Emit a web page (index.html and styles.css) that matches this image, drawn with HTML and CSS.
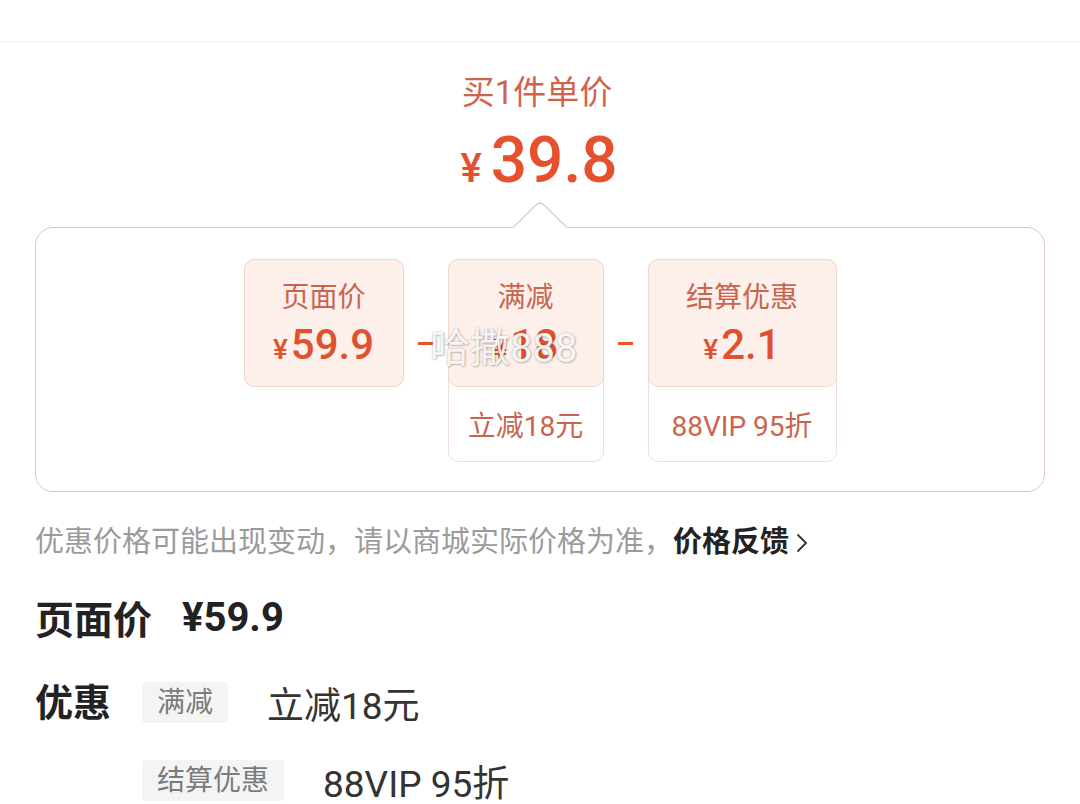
FILE: index.html
```html
<!DOCTYPE html>
<html lang="zh-CN">
<head>
<meta charset="utf-8">
<title>价格详情</title>
<link rel="stylesheet" href="styles.css">
</head>
<body>
<div class="topbar"></div>
<main class="page">
  <section class="summary">
    <div class="summary-title">买1件单价</div>
    <div class="summary-price"><span class="cur">¥</span>39.8</div>
  </section>

  <section class="breakdown">
    <svg class="notch" width="54" height="27" viewBox="0 0 54 27">
      <rect x="0" y="24" width="54" height="3" fill="#fff"/>
      <path d="M0 26.5 L23 4 Q27 0 31 4 L54 26.5" fill="#fff" stroke="#dbc7bf" stroke-width="1.2"/>
    </svg>
    <div class="cards">
      <div class="card card-page">
        <div class="card-top">
          <div class="card-label">页面价</div>
          <div class="card-price"><span class="cur">¥</span>59.9</div>
        </div>
      </div>
      <div class="op"><span class="op-bar"></span></div>
      <div class="card card-full">
        <div class="card-top">
          <div class="card-label">满减</div>
          <div class="card-price"><span class="cur">¥</span>18</div>
        </div>
        <div class="card-bottom">立减18元</div>
      </div>
      <div class="op"><span class="op-bar"></span></div>
      <div class="card card-settle">
        <div class="card-top">
          <div class="card-label">结算优惠</div>
          <div class="card-price"><span class="cur">¥</span>2.1</div>
        </div>
        <div class="card-bottom">88VIP 95折</div>
      </div>
    </div>
    <div class="watermark">哈撒888</div>
  </section>

  <p class="note">优惠价格可能出现变动，请以商城实际价格为准，<span class="feedback">价格反馈<svg class="chev" width="12" height="22" viewBox="0 0 12 22"><polyline points="2,3 10,11 2,19" fill="none" stroke="#333" stroke-width="1.8" stroke-linecap="round" stroke-linejoin="round"/></svg></span></p>

  <div class="line-price">
    <span class="lp-label">页面价</span>
    <span class="lp-value">¥59.9</span>
  </div>

  <div class="discounts">
    <div class="disc-row">
      <span class="disc-label">优惠</span>
      <span class="tag">满减</span>
      <span class="disc-text">立减18元</span>
    </div>
    <div class="disc-row">
      <span class="disc-label"></span>
      <span class="tag">结算优惠</span>
      <span class="disc-text">88VIP 95折</span>
    </div>
  </div>
</main>
</body>
</html>
```

FILE: styles.css
```css
html, body {
  margin: 0;
  padding: 0;
  background: #ffffff;
}
body {
  font-family: Roboto, "Noto Sans CJK SC", sans-serif;
  width: 1080px;
  height: 804px;
  overflow: hidden;
}
.topbar {
  height: 41px;
  border-bottom: 1px solid #efefef;
}
.page {
  padding: 0 35px;
}
.summary {
  text-align: center;
  padding-top: 29px;
}
.summary-title {
  font-size: 33px;
  line-height: 44px;
  color: #d2634b;
  margin-left: -6px;
}
.summary-price {
  margin-top: 14px;
  font-size: 64px;
  line-height: 64px;
  font-weight: 500;
  color: #e5512f;
  margin-left: -2px;
}
.summary-price .cur {
  font-size: 40px;
  margin-right: 9px;
  font-weight: 500;
}
.breakdown {
  position: relative;
  margin-top: 26px;
  border: 1px solid #dbc7bf;
  border-radius: 18px;
  box-sizing: border-box;
  height: 265px;
}
.notch {
  position: absolute;
  top: -27px;
  left: 50%;
  margin-left: -27px;
  display: block;
}
.cards {
  display: flex;
  justify-content: center;
  align-items: flex-start;
  padding-top: 31px;
}
.card {
  border: 1px solid #f0ddd5;
  border-radius: 10px;
  box-sizing: border-box;
  text-align: center;
}
.card-page { width: 160px; }
.card-full { width: 156px; }
.card-settle { width: 189px; }
.card-top {
  margin: -1px;
  height: 128px;
  box-sizing: border-box;
  padding-top: 20px;
  border: 1px solid #f2d7cc;
  border-radius: 10px;
  background: #fdefea;
}
.card-label {
  font-size: 28px;
  line-height: 36px;
  color: #c9654f;
}
.card-price {
  margin-top: 5px;
  font-size: 42px;
  line-height: 48px;
  font-weight: 500;
  color: #e0512f;
}
.card-price .cur {
  font-size: 28px;
  margin-right: 3px;
}
.card-bottom {
  height: 74px;
  margin-top: 1px;
  display: flex;
  align-items: center;
  justify-content: center;
  font-size: 28px;
  color: #c9654f;
}
.op {
  width: 44px;
  display: flex;
  justify-content: center;
  padding-top: 83px;
}
.op-bar {
  width: 15px;
  height: 3px;
  background: #e5532f;
}
.watermark {
  position: absolute;
  left: 394px;
  top: 97px;
  font-size: 40px;
  line-height: 48px;
  color: rgba(255, 255, 255, 0.93);
  text-shadow: 0 0 2px rgba(0, 0, 0, 0.3), 1px 1px 2px rgba(0, 0, 0, 0.18);
  white-space: nowrap;
}
.note {
  margin: 30px 0 0;
  font-size: 29px;
  line-height: 40px;
  color: #9b9b9b;
  white-space: nowrap;
}
.feedback {
  color: #222;
  font-weight: 700;
}
.chev {
  margin-left: 7px;
  vertical-align: -2px;
}
.line-price {
  margin-top: 30px;
  display: flex;
  align-items: center;
  gap: 30px;
  height: 50px;
  font-size: 39px;
  font-weight: 700;
  color: #222;
}
.lp-value {
  font-size: 40px;
}
.discounts {
  margin-top: 40px;
  display: flex;
  flex-direction: column;
  gap: 37px;
}
.disc-row {
  display: flex;
  align-items: center;
  height: 41px;
}
.disc-label {
  width: 107px;
  font-size: 38px;
  font-weight: 700;
  color: #222;
  margin-top: -6px;
}
.tag {
  height: 41px;
  line-height: 41px;
  padding: 0 15px;
  background: #f4f4f4;
  border-radius: 4px;
  font-size: 28px;
  color: #7b7b7b;
}
.disc-text {
  margin-left: 39px;
  font-size: 37px;
  color: #333;
}
```
